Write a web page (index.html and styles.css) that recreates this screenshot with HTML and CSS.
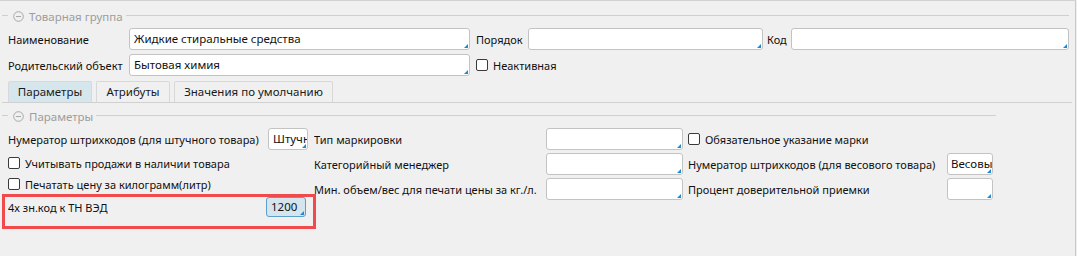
FILE: index.html
```html
<!DOCTYPE html>
<html lang="ru">
<head>
    <meta charset="UTF-8">
    <title>Товарная группа</title>
    <link rel="stylesheet" href="styles.css">
</head>
<body>
    <div class="panel">
        <div class="group-title head-main">
            <span class="line-left"></span>
            <svg class="collapse" width="11" height="11" viewBox="0 0 11 11"><circle cx="5.5" cy="5.5" r="4.8" fill="none" stroke="#a8a8a8"/><line x1="3" y1="5.5" x2="8" y2="5.5" stroke="#a8a8a8"/></svg>
            <span class="title-text">Товарная группа</span>
            <span class="line-right"></span>
        </div>

        <div class="row row-first">
            <span class="lbl lbl-main">Наименование</span>
            <div class="field f-name">Жидкие стиральные средства</div>
            <span class="lbl lbl-order">Порядок</span>
            <div class="field f-order"></div>
            <span class="lbl lbl-code">Код</span>
            <div class="field f-code"></div>
        </div>
        <div class="row">
            <span class="lbl lbl-main">Родительский объект</span>
            <div class="field f-name">Бытовая химия</div>
            <span class="check check-inactive"></span>
            <span class="lbl">Неактивная</span>
        </div>

        <div class="tabs">
            <div class="tab active">Параметры</div>
            <div class="tab">Атрибуты</div>
            <div class="tab">Значения по умолчанию</div>
        </div>

        <div class="group-title head-params">
            <span class="line-left"></span>
            <svg class="collapse" width="11" height="11" viewBox="0 0 11 11"><circle cx="5.5" cy="5.5" r="4.8" fill="none" stroke="#a8a8a8"/><line x1="3" y1="5.5" x2="8" y2="5.5" stroke="#a8a8a8"/></svg>
            <span class="title-text">Параметры</span>
            <span class="line-right line-short"></span>
        </div>

        <div class="params">
            <div class="col col-1">
                <div class="prow">
                    <span class="lbl grow">Нумератор штрихкодов (для штучного товара)</span>
                    <div class="field f-small">Штучный</div>
                </div>
                <div class="prow prow-check first-check">
                    <span class="check"></span>
                    <span class="lbl">Учитывать продажи в наличии товара</span>
                </div>
                <div class="prow prow-check">
                    <span class="check"></span>
                    <span class="lbl">Печатать цену за килограмм(литр)</span>
                </div>
                <div class="prow highlight">
                    <span class="lbl grow">4х зн.код к ТН ВЭД</span>
                    <div class="field f-small f-focus">1200</div>
                </div>
            </div>

            <div class="col col-2">
                <div class="prow">
                    <span class="lbl grow">Тип маркировки</span>
                    <div class="field f-mid"></div>
                </div>
                <div class="prow">
                    <span class="lbl grow">Категорийный менеджер</span>
                    <div class="field f-mid"></div>
                </div>
                <div class="prow">
                    <span class="lbl grow">Мин. объем/вес для печати цены за кг./л.</span>
                    <div class="field f-mid"></div>
                </div>
            </div>

            <div class="col col-3">
                <div class="prow">
                    <span class="check"></span>
                    <span class="lbl">Обязательное указание марки</span>
                </div>
                <div class="prow">
                    <span class="lbl grow">Нумератор штрихкодов (для весового товара)</span>
                    <div class="field f-weight">Весовый</div>
                </div>
                <div class="prow">
                    <span class="lbl grow">Процент доверительной приемки</span>
                    <div class="field f-weight"></div>
                </div>
            </div>
        </div>
    </div>
</body>
</html>
```

FILE: styles.css
```css
body {
    margin: 0;
    background-color: #f0f0f0;
    font-family: "Noto Sans", "Open Sans", sans-serif;
    font-size: 11px;
    color: #111;
}

.panel {
    width: 1075px;
    height: 255px;
    border-top: 1px solid #d2d2d2;
    border-right: 1px solid #c9c9c9;
    overflow: hidden;
}

/* group headers */
.group-title {
    display: flex;
    align-items: center;
    height: 14px;
    color: #9d9d9d;
    font-size: 11.5px;
}

.head-main {
    margin-top: 8px;
}

.head-params {
    margin-top: 6px;
}

.line-left {
    width: 6px;
    height: 1px;
    margin-left: 2px;
    margin-top: -2px;
    background-color: #cfcfcf;
}

.collapse {
    margin-left: 5px;
    margin-right: 5px;
}

.title-text {
    white-space: nowrap;
}

.line-right {
    flex: 1;
    height: 1px;
    margin-left: 3px;
    margin-right: 6px;
    margin-top: -2px;
    background-color: #cfcfcf;
}

.line-short {
    flex: none;
    width: 900px;
}

/* rows of the top group */
.row {
    display: flex;
    align-items: center;
    height: 22px;
    padding-left: 8px;
    margin-top: 4px;
}

.row-first {
    margin-top: 5px;
}

.lbl {
    white-space: nowrap;
}

.lbl-main {
    width: 121px;
}

.lbl-order {
    margin-left: 6px;
    width: 52px;
}

.lbl-code {
    margin-left: 4px;
    width: 24px;
}

/* text fields */
.field {
    position: relative;
    box-sizing: border-box;
    height: 22px;
    line-height: 20px;
    padding-left: 4px;
    background-color: #fff;
    border: 1px solid #c3c3c3;
    border-radius: 3px;
    white-space: nowrap;
    overflow: hidden;
    font-size: 11.5px;
}

.field::after {
    content: "";
    position: absolute;
    right: 1px;
    bottom: 1px;
    border-left: 4px solid transparent;
    border-bottom: 4px solid #1b8ad2;
}

.f-name {
    width: 341px;
}

.f-order {
    width: 235px;
}

.f-code {
    width: 278px;
}

.f-small {
    width: 40px;
}

.f-mid {
    width: 137px;
}

.f-weight {
    width: 46px;
    padding-left: 3px;
}

.f-focus {
    height: 20px;
    line-height: 18px;
    background-color: #d4e5ee;
    border-color: #5c9fcb;
}

/* checkbox */
.check {
    box-sizing: border-box;
    flex: none;
    width: 12px;
    height: 12px;
    margin-right: 5px;
    background-color: #fff;
    border: 1px solid #3a3a3a;
    border-radius: 2px;
}

.check-inactive {
    margin-left: 6px;
}

/* tabs */
.tabs {
    display: flex;
    gap: 4px;
    margin-top: 5px;
    margin-left: 2px;
    margin-right: 3px;
    padding-left: 6px;
    border-bottom: 1px solid #d0d0d0;
}

.tab {
    box-sizing: border-box;
    height: 21px;
    line-height: 19px;
    text-align: center;
    border: 1px solid #d8d8d8;
    border-bottom: none;
    border-radius: 2px 2px 0 0;
    color: #1a1a1a;
    font-size: 11.5px;
}

.tab:nth-child(1) {
    width: 84px;
}

.tab:nth-child(2) {
    width: 74px;
}

.tab:nth-child(3) {
    width: 159px;
}

.tab.active {
    background-color: #d6e6ed;
}

/* parameters */
.params {
    display: flex;
    margin-top: 5px;
}

.col {
    display: flex;
    flex-direction: column;
}

.col-1 {
    width: 300px;
    margin-left: 8px;
}

.col-2 {
    width: 369px;
    margin-left: 6px;
    gap: 3px;
}

.col-3 {
    width: 305px;
    margin-left: 5px;
    gap: 3px;
}

.prow {
    display: flex;
    align-items: center;
    height: 22px;
}

.prow-check {
    height: 20px;
    margin-top: 1px;
}

.first-check {
    margin-top: 3px;
}

.grow {
    flex: 1;
    overflow: hidden;
}

.highlight {
    height: 29px;
    align-items: flex-start;
    margin-left: -6px;
    margin-right: -8px;
    padding-left: 3px;
    padding-right: 7px;
    border: 3px solid #f04a4c;
}

.highlight .lbl {
    line-height: 22px;
}
```
